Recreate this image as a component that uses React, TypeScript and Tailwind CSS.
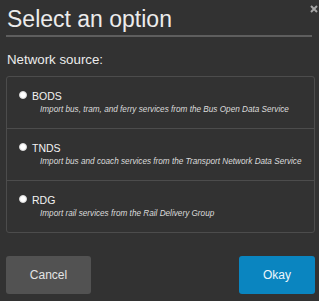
const options = [
  { id: "bods", label: "BODS", desc: "Import bus, tram, and ferry services from the Bus Open Data Service" },
  { id: "tnds", label: "TNDS", desc: "Import bus and coach services from the Transport Network Data Service" },
  { id: "rdg", label: "RDG", desc: "Import rail services from the Rail Delivery Group" },
];

export default function App() {
  return (
    <div className="relative w-[319px] h-[301px] bg-[#323232] pl-[6px] pr-[4px] pt-[6px] font-['Liberation_Sans',Arial,sans-serif] overflow-hidden">
      {/* close */}
      <button className="absolute right-[1px] top-[5px] w-[8px] h-[8px]">
        <svg viewBox="0 0 8 8" className="w-[8px] h-[8px] block">
          <path d="M1 1 L7 7 M7 1 L1 7" stroke="#a5a5a5" strokeWidth="2" />
        </svg>
      </button>

      {/* Header */}
      <h1 className="pl-[1px] text-[23px] leading-[26px] text-[#ececec]">Select an option</h1>
      <div className="mt-[3px] mr-[3px] h-[2px] bg-[#5e5e5e]" />

      <p className="mt-[15px] pl-[1px] text-[13.3px] leading-[16px] text-[#ececec]">Network source:</p>

      {/* Options */}
      <div className="mt-[8px] border border-[#4c4c4c] rounded-[3px]">
        {options.map((opt, i) => (
          <div
            key={opt.id}
            className={`h-[51px] pl-[12px] pt-[13px] ${i > 0 ? "border-t border-[#4c4c4c] h-[52px]" : ""}`}
          >
            <div className="flex items-start gap-[5px]">
              <div className="mt-[1px] w-[8px] h-[8px] rounded-full bg-white border border-[#d8d8d8]" />
              <span className="text-[10.5px] leading-[12px] text-[#f2f2f2]">{opt.label}</span>
            </div>
            <p className="mt-[3px] ml-[21px] text-[8.2px] leading-[10px] italic text-[#dcdcdc]">{opt.desc}</p>
          </div>
        ))}
      </div>

      {/* Buttons */}
      <div className="mt-[23px] flex justify-between">
        <button className="w-[85px] h-[38px] rounded-[3px] bg-[#525252] text-[12px] text-[#e4e4e4]">Cancel</button>
        <button className="w-[76px] h-[38px] rounded-[3px] bg-[#0a85c0] text-[12px] text-[#eef6fb]">Okay</button>
      </div>
    </div>
  );
}
